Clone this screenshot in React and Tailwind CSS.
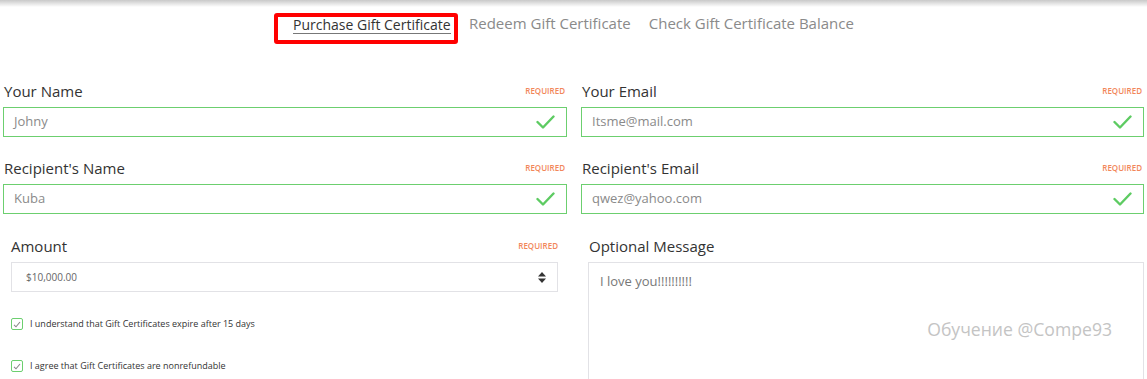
import React from "react";

const font = { fontFamily: '"Open Sans", "Noto Sans", Arial, sans-serif' };

function Check() {
  return (
    <svg width="19" height="14" viewBox="0 0 19 14" className="shrink-0">
      <polyline points="1.5,7 7,12.5 17.5,1.5" fill="none" stroke="#5dcb62" strokeWidth="2.4" strokeLinecap="round" strokeLinejoin="round" />
    </svg>
  );
}

function Field({ label, value }) {
  return (
    <div className="flex flex-col">
      <div className="flex h-[22px] items-center justify-between pl-[1px] pr-[2px]">
        <span className="text-[15px] text-[#333]">{label}</span>
        <span className="text-[8px] font-semibold text-[#f2875a]">REQUIRED</span>
      </div>
      <div className="mt-[5px] flex h-[30px] items-center justify-between border border-[#6ccf6f] pl-[10px] pr-[11px]">
        <span className="text-[13px] text-[#8a8a8a]">{value}</span>
        <Check />
      </div>
    </div>
  );
}

function Box({ text }) {
  return (
    <div className="flex h-[12px] items-center gap-[7px]">
      <div className="flex h-[12px] w-[12px] items-center justify-center rounded-[2px] border border-[#6ccf6f]">
        <svg width="8" height="7" viewBox="0 0 8 7">
          <polyline points="1,3.8 3,5.8 7,1" fill="none" stroke="#888" strokeWidth="1.1" />
        </svg>
      </div>
      <span className="whitespace-nowrap text-[9px] text-[#333]">{text}</span>
    </div>
  );
}

export default function App() {
  return (
    <div className="relative h-[379px] w-[1147px] overflow-hidden bg-white" style={font}>
      <div className="h-[7px] w-full bg-gradient-to-b from-[#c9c9c9] to-white" />
      <div className="flex h-[44px] items-start pl-[274px] pt-[6px]">
        <div className="flex h-[31px] w-[184px] items-start whitespace-nowrap rounded-[3px] border-[4px] border-[#f00] pl-[15px]">
          <span className="border-b border-[#777] text-[14px] leading-[16px] text-[#333]">Purchase Gift Certificate</span>
        </div>
        <span className="ml-[11px] mt-[2px] whitespace-nowrap text-[15px] leading-[17px] text-[#8a8a8a]">Redeem Gift Certificate</span>
        <span className="ml-[18px] mt-[2px] whitespace-nowrap text-[15px] leading-[17px] text-[#8a8a8a]">Check Gift Certificate Balance</span>
      </div>
      <div className="grid grid-cols-[564px_563px] gap-x-[14px] pl-[3px] pt-[29px]">
        <Field label="Your Name" value="Johny" />
        <Field label="Your Email" value="Itsme@mail.com" />
        <div className="mt-[20px]">
          <Field label="Recipient's Name" value="Kuba" />
        </div>
        <div className="mt-[20px]">
          <Field label="Recipient's Email" value="qwez@yahoo.com" />
        </div>
      </div>
      <div className="mt-[21px] flex">
        <div className="ml-[11px] flex w-[547px] flex-col">
          <div className="flex h-[22px] items-center justify-between">
            <span className="text-[15px] text-[#333]">Amount</span>
            <span className="text-[8px] font-semibold text-[#f2875a]">REQUIRED</span>
          </div>
          <div className="mt-[5px] flex h-[30px] items-center justify-between border border-[#e2e2e6] pl-[14px] pr-[11px]">
            <span className="text-[10px] text-[#666]">$10,000.00</span>
            <svg width="8" height="11" viewBox="0 0 8 11">
              <polygon points="4,0 8,4.5 0,4.5" fill="#333" />
              <polygon points="0,6.5 8,6.5 4,11" fill="#333" />
            </svg>
          </div>
          <div className="mt-[26px]">
            <Box text="I understand that Gift Certificates expire after 15 days" />
          </div>
          <div className="mt-[30px]">
            <Box text="I agree that Gift Certificates are nonrefundable" />
          </div>
        </div>
        <div className="ml-[30px] flex w-[556px] flex-col">
          <div className="flex h-[22px] items-center pl-[1px]">
            <span className="text-[15px] text-[#333]">Optional Message</span>
          </div>
          <div className="mt-[5px] flex h-[140px] flex-col border border-[#e2e2e6] pl-[11px] pr-[31px] pt-[9px]">
            <span className="text-[13px] text-[#777]">I love you!!!!!!!!!!</span>
            <span className="mt-[24px] self-end text-[17.6px] text-[#c4c4c4]">Обучение @Compe93</span>
          </div>
        </div>
      </div>
    </div>
  );
}
